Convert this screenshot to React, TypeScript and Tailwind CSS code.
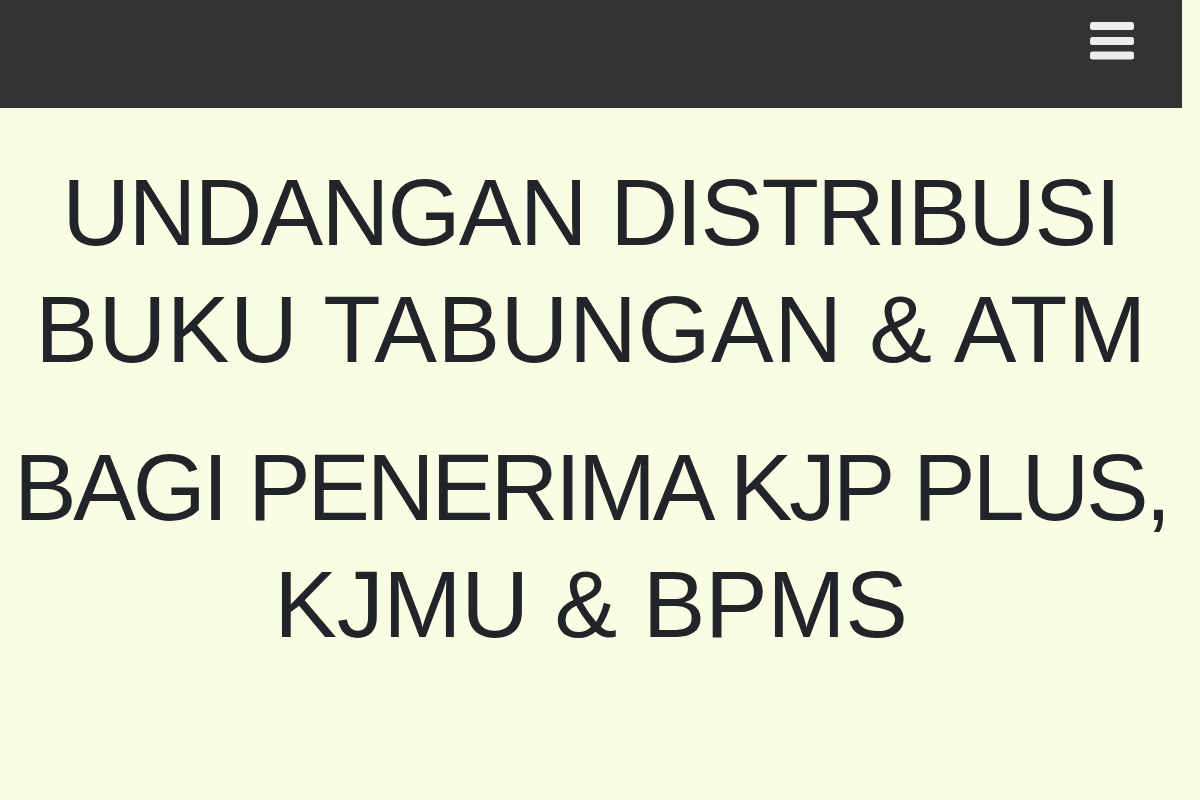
import React from 'react';

const TITLE_LINES: { text: string; tracking: string }[][] = [
  [
    { text: 'UNDANGAN DISTRIBUSI', tracking: 'tracking-[-1.8px]' },
    { text: 'BUKU TABUNGAN & ATM', tracking: 'tracking-[0.5px]' },
  ],
  [
    { text: 'BAGI PENERIMA KJP PLUS,', tracking: 'tracking-[-3.35px]' },
    { text: 'KJMU & BPMS', tracking: 'tracking-[-0.35px]' },
  ],
];

function MenuIcon() {
  return (
    <svg width="44" height="38" viewBox="0 0 44 38" aria-hidden>
      <rect x="0" y="0" width="44" height="8" rx="2.5" fill="#ececec" />
      <rect x="0" y="15" width="44" height="8" rx="2.5" fill="#ececec" />
      <rect x="0" y="29.5" width="44" height="8" rx="2.5" fill="#ececec" />
    </svg>
  );
}

export default function App() {
  return (
    <div className="min-h-[800px] w-full bg-[#fafde4] font-['Liberation_Sans',Arial,sans-serif] text-[#212529]">
      <header className="mr-[18px] flex h-[108px] items-start justify-end bg-[#333333] pr-[48px] pt-[22px]">
        <button type="button" aria-label="Menu" className="flex">
          <MenuIcon />
        </button>
      </header>

      <main className="mr-[18px] flex flex-col items-center gap-[41px] pt-[46px]">
        {TITLE_LINES.map((para, i) => (
          <h1 key={i} className="flex flex-col items-center text-[94px] font-normal leading-[117px]">
            {para.map((line) => (
              <span key={line.text} className={`whitespace-nowrap ${line.tracking}`}>
                {line.text}
              </span>
            ))}
          </h1>
        ))}
      </main>
    </div>
  );
}
